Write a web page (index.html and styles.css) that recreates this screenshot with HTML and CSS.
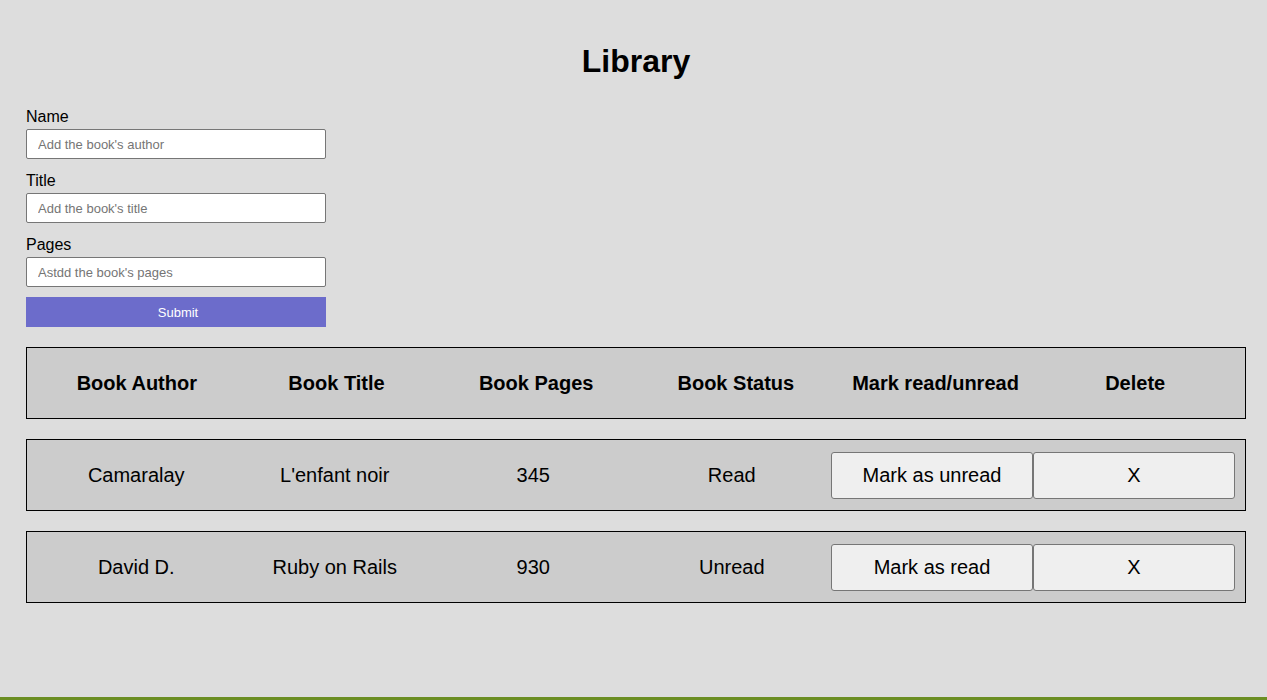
FILE: index.html
```html
<!DOCTYPE html>
<html lang="en">
<head>
<meta charset="utf-8">
<title>Library</title>
<link rel="stylesheet" href="styles.css">
</head>
<body>
<main class="page">
  <h1 class="title">Library</h1>
  <form class="book-form">
    <label class="field-label" for="name">Name</label>
    <input class="field-input" id="name" type="text" placeholder="Add the book's author">
    <label class="field-label" for="title">Title</label>
    <input class="field-input" id="title" type="text" placeholder="Add the book's title">
    <label class="field-label" for="pages">Pages</label>
    <input class="field-input" id="pages" type="text" placeholder="Astdd the book's pages">
    <button class="submit-btn" type="button">Submit</button>
  </form>
  <section class="library">
    <div class="table-head">
      <div class="cell">Book Author</div>
      <div class="cell">Book Title</div>
      <div class="cell">Book Pages</div>
      <div class="cell">Book Status</div>
      <div class="cell">Mark read/unread</div>
      <div class="cell">Delete</div>
    </div>
    <div class="table-row">
      <div class="cell">Camaralay</div>
      <div class="cell">L'enfant noir</div>
      <div class="cell">345</div>
      <div class="cell">Read</div>
      <button class="row-btn" type="button">Mark as unread</button>
      <button class="row-btn" type="button">X</button>
    </div>
    <div class="table-row">
      <div class="cell">David D.</div>
      <div class="cell">Ruby on Rails</div>
      <div class="cell">930</div>
      <div class="cell">Unread</div>
      <button class="row-btn" type="button">Mark as read</button>
      <button class="row-btn" type="button">X</button>
    </div>
  </section>
</main>
</body>
</html>
```
FILE: styles.css
```css
* {
  box-sizing: border-box;
}

html, body {
  margin: 0;
  padding: 0;
}

body {
  background: #dddddd;
  font-family: "Liberation Sans", Arial, sans-serif;
  color: #000;
  min-height: 100vh;
  border-bottom: 3px solid #6b8e23;
}

.page {
  padding: 0 21px 0 26px;
}

.title {
  margin: 0;
  padding-top: 43px;
  font-size: 32px;
  line-height: 37px;
  font-weight: bold;
  text-align: center;
}

.book-form {
  display: flex;
  flex-direction: column;
  align-items: flex-start;
  width: 300px;
  margin-top: 27px;
}

.field-label {
  font-size: 16px;
  line-height: 18px;
  margin-top: 1px;
  margin-bottom: 3px;
}

.field-input {
  width: 300px;
  height: 30px;
  border: 1px solid #767676;
  border-radius: 2px;
  background: #fff;
  padding: 0 11px;
  font-family: "Liberation Sans", Arial, sans-serif;
  font-size: 13px;
  margin: 0 0 12px 0;
}

.field-input::placeholder {
  color: #757575;
}

.submit-btn {
  width: 300px;
  height: 30px;
  margin-top: -2px;
  border: none;
  background: #6c6ccb;
  color: #fff;
  font-family: "Liberation Sans", Arial, sans-serif;
  font-size: 13px;
  padding: 0 0 0 4px;
}

.library {
  display: flex;
  flex-direction: column;
  gap: 20px;
  margin-top: 20px;
  width: 1220px;
}

.table-head,
.table-row {
  display: grid;
  align-items: center;
  height: 72px;
  padding: 0 10px;
  background: #cccccc;
  border: 1px solid #000;
  font-size: 20px;
}

.table-head {
  grid-template-columns: repeat(6, 1fr);
  font-weight: bold;
}

.table-row {
  grid-template-columns: repeat(4, 1fr) 202px 202px;
}

.cell {
  text-align: center;
}

.row-btn {
  height: 47px;
  width: 202px;
  border: 1px solid #767676;
  border-radius: 3px;
  background: #efefef;
  color: #000;
  font-family: "Liberation Sans", Arial, sans-serif;
  font-size: 20px;
  padding: 0;
}
```
